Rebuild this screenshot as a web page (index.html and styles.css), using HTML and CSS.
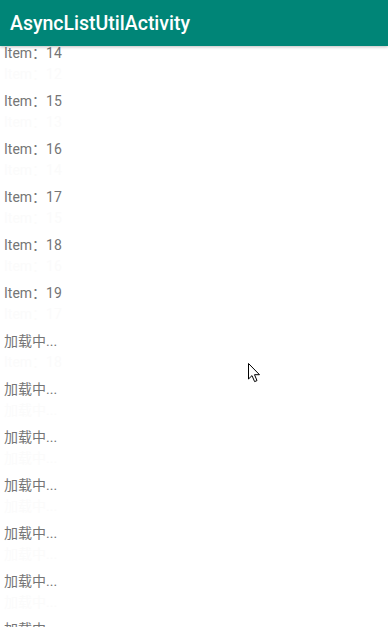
FILE: index.html
```html
<!DOCTYPE html>
<html lang="en">

<head>
    <meta charset="UTF-8">
    <title>AsyncListUtilActivity</title>
    <link rel="stylesheet" href="styles.css">
</head>

<body>
    <div class="toolbar">AsyncListUtilActivity</div>
    <div class="list">
        <div class="row first">Item：14<span class="trail">Item：12</span></div>
        <div class="row">Item：15<span class="trail">Item：13</span></div>
        <div class="row">Item：16<span class="trail">Item：14</span></div>
        <div class="row">Item：17<span class="trail">Item：15</span></div>
        <div class="row">Item：18<span class="trail">Item：16</span></div>
        <div class="row">Item：19<span class="trail">Item：17</span></div>
        <div class="row">加载中...<span class="trail">Item：18</span></div>
        <div class="row">加载中...<span class="trail">加载中...</span></div>
        <div class="row">加载中...<span class="trail">加载中...</span></div>
        <div class="row">加载中...<span class="trail">加载中...</span></div>
        <div class="row">加载中...<span class="trail">加载中...</span></div>
        <div class="row">加载中...<span class="trail">加载中...</span></div>
        <div class="row">加载中...</div>
    </div>
    <svg class="cursor" width="13" height="20" viewBox="0 0 13 20">
        <path d="M0.5 0.5 L0.5 16 L4 12.6 L6.6 18.6 L9 17.6 L6.5 11.7 L11.5 11.7 Z" fill="#fff" stroke="#000" stroke-width="1" stroke-linejoin="miter" />
    </svg>
</body>

</html>
```

FILE: styles.css
```css
html,
body {
    margin: 0;
    padding: 0;
    background: #fff;
    height: 100%;
    overflow: hidden;
}

body {
    font-family: Roboto, "Noto Sans CJK SC", sans-serif;
    position: relative;
}

/* App bar */
.toolbar {
    position: relative;
    z-index: 2;
    height: 46px;
    box-sizing: border-box;
    padding: 2px 0 0 10px;
    line-height: 44px;
    background-color: #008577;
    color: #fff;
    font-size: 19.5px;
    font-weight: 500;
    box-shadow: 0 1px 3px rgba(0, 0, 0, 0.25);
}

/* Recycler list */
.list {
    display: flex;
    flex-direction: column;
}

.row {
    position: relative;
    height: 48px;
    box-sizing: border-box;
    padding: 12px 0 0 4px;
    line-height: 20px;
    font-size: 14px;
    color: #757575;
    white-space: nowrap;
}

.row.first {
    margin-top: -15px;
}

.trail {
    position: absolute;
    left: 4px;
    top: 33px;
    color: #fbfbfb;
}

.cursor {
    position: absolute;
    left: 248px;
    top: 363px;
    z-index: 3;
}
```
